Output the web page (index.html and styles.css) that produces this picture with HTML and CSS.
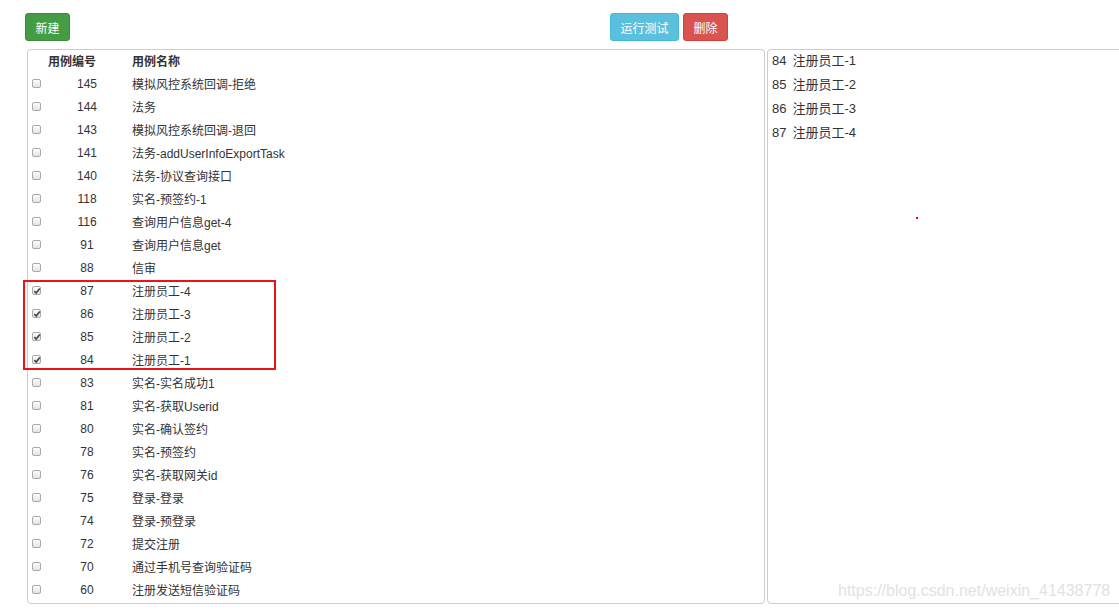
FILE: index.html
```html
<!DOCTYPE html>
<html lang="zh-CN">

<head>
    <meta charset="UTF-8">
    <meta name="viewport" content="width=device-width, initial-scale=1.0">
    <title>用例管理</title>
    <link rel="stylesheet" href="styles.css">
</head>

<body>
    <div class="toolbar">
        <button class="btn btn-success">新建</button>
        <div class="btn-group">
            <button class="btn btn-info">运行测试</button>
            <button class="btn btn-danger">删除</button>
        </div>
    </div>
    <div class="panels">
        <div class="panel case-panel">
            <table class="case-table">
                <thead>
                    <tr>
                        <th class="col-check"></th>
                        <th class="col-id">用例编号</th>
                        <th class="col-name">用例名称</th>
                    </tr>
                </thead>
                <tbody>
                    <tr><td class="col-check"><span class="cb"></span></td><td class="col-id">145</td><td class="col-name">模拟风控系统回调-拒绝</td></tr>
                    <tr><td class="col-check"><span class="cb"></span></td><td class="col-id">144</td><td class="col-name">法务</td></tr>
                    <tr><td class="col-check"><span class="cb"></span></td><td class="col-id">143</td><td class="col-name">模拟风控系统回调-退回</td></tr>
                    <tr><td class="col-check"><span class="cb"></span></td><td class="col-id">141</td><td class="col-name">法务-addUserInfoExportTask</td></tr>
                    <tr><td class="col-check"><span class="cb"></span></td><td class="col-id">140</td><td class="col-name">法务-协议查询接口</td></tr>
                    <tr><td class="col-check"><span class="cb"></span></td><td class="col-id">118</td><td class="col-name">实名-预签约-1</td></tr>
                    <tr><td class="col-check"><span class="cb"></span></td><td class="col-id">116</td><td class="col-name">查询用户信息get-4</td></tr>
                    <tr><td class="col-check"><span class="cb"></span></td><td class="col-id">91</td><td class="col-name">查询用户信息get</td></tr>
                    <tr><td class="col-check"><span class="cb"></span></td><td class="col-id">88</td><td class="col-name">信审</td></tr>
                    <tr><td class="col-check"><span class="cb checked"><svg viewBox="0 0 8 8" width="8" height="8"><path d="M1.3 4.2 L3.2 6 L6.8 1.6" fill="none" stroke="#444" stroke-width="1.6"/></svg></span></td><td class="col-id">87</td><td class="col-name">注册员工-4</td></tr>
                    <tr><td class="col-check"><span class="cb checked"><svg viewBox="0 0 8 8" width="8" height="8"><path d="M1.3 4.2 L3.2 6 L6.8 1.6" fill="none" stroke="#444" stroke-width="1.6"/></svg></span></td><td class="col-id">86</td><td class="col-name">注册员工-3</td></tr>
                    <tr><td class="col-check"><span class="cb checked"><svg viewBox="0 0 8 8" width="8" height="8"><path d="M1.3 4.2 L3.2 6 L6.8 1.6" fill="none" stroke="#444" stroke-width="1.6"/></svg></span></td><td class="col-id">85</td><td class="col-name">注册员工-2</td></tr>
                    <tr><td class="col-check"><span class="cb checked"><svg viewBox="0 0 8 8" width="8" height="8"><path d="M1.3 4.2 L3.2 6 L6.8 1.6" fill="none" stroke="#444" stroke-width="1.6"/></svg></span></td><td class="col-id">84</td><td class="col-name">注册员工-1</td></tr>
                    <tr><td class="col-check"><span class="cb"></span></td><td class="col-id">83</td><td class="col-name">实名-实名成功1</td></tr>
                    <tr><td class="col-check"><span class="cb"></span></td><td class="col-id">81</td><td class="col-name">实名-获取Userid</td></tr>
                    <tr><td class="col-check"><span class="cb"></span></td><td class="col-id">80</td><td class="col-name">实名-确认签约</td></tr>
                    <tr><td class="col-check"><span class="cb"></span></td><td class="col-id">78</td><td class="col-name">实名-预签约</td></tr>
                    <tr><td class="col-check"><span class="cb"></span></td><td class="col-id">76</td><td class="col-name">实名-获取网关id</td></tr>
                    <tr><td class="col-check"><span class="cb"></span></td><td class="col-id">75</td><td class="col-name">登录-登录</td></tr>
                    <tr><td class="col-check"><span class="cb"></span></td><td class="col-id">74</td><td class="col-name">登录-预登录</td></tr>
                    <tr><td class="col-check"><span class="cb"></span></td><td class="col-id">72</td><td class="col-name">提交注册</td></tr>
                    <tr><td class="col-check"><span class="cb"></span></td><td class="col-id">70</td><td class="col-name">通过手机号查询验证码</td></tr>
                    <tr><td class="col-check"><span class="cb"></span></td><td class="col-id">60</td><td class="col-name">注册发送短信验证码</td></tr>
                </tbody>
            </table>
            <div class="highlight"></div>
        </div>
        <div class="panel selected-panel">
            <div class="selected-item"><span class="sel-id">84</span>注册员工-1</div>
            <div class="selected-item"><span class="sel-id">85</span>注册员工-2</div>
            <div class="selected-item"><span class="sel-id">86</span>注册员工-3</div>
            <div class="selected-item"><span class="sel-id">87</span>注册员工-4</div>
            <div class="dot"></div>
        </div>
    </div>
    <div class="watermark">https://blog.csdn.net/weixin_41438778</div>
</body>

</html>
```
FILE: styles.css
```css
* {
    margin: 0;
    padding: 0;
    box-sizing: border-box;
}

body {
    font-family: "Liberation Sans", "Noto Sans CJK SC", sans-serif;
    font-size: 12px;
    color: #333;
    background: #fff;
    padding: 13px 0 0 25px;
    overflow: hidden;
    height: 613px;
    position: relative;
}

.toolbar {
    display: flex;
    height: 28px;
}

.btn-group {
    display: flex;
    gap: 4px;
    margin-left: 540px;
}

.btn {
    height: 28px;
    padding: 0 9.5px;
    border: 1px solid transparent;
    border-radius: 3px;
    color: #fff;
    font-family: inherit;
    font-size: 12px;
}

.btn-success {
    background-color: #449d44;
    border-color: #3d8b3d;
}

.btn-info {
    background-color: #5bc0de;
    border-color: #46b8da;
}

.btn-danger {
    background-color: #d9534f;
    border-color: #d43f3a;
}

.panels {
    display: flex;
    gap: 2px;
    margin-top: 8px;
    margin-left: 2px;
}

.panel {
    flex-shrink: 0;
    border: 1px solid #ccc;
    border-radius: 4px;
    height: 555px;
    position: relative;
}

.case-panel {
    width: 738px;
}

.selected-panel {
    width: 370px;
    padding-left: 4px;
    padding-top: 0;
}

.case-table {
    border-collapse: collapse;
    margin-top: -1px;
}

.case-table th,
.case-table td {
    height: 23px;
    padding: 0;
    vertical-align: middle;
    white-space: nowrap;
}

.case-table th {
    font-weight: bold;
    text-align: left;
}

.col-check {
    width: 20px;
    padding-left: 4px !important;
}

.col-id {
    width: 84px;
}

td.col-id {
    text-align: center;
    padding-right: 6px !important;
}

.cb {
    display: block;
    width: 9px;
    height: 9px;
    border: 1px solid #aaa;
    border-radius: 2px;
    background: linear-gradient(#fdfdfd, #e4e4e4);
    position: relative;
}

.cb svg {
    position: absolute;
    left: -0.5px;
    top: -0.5px;
}

.highlight {
    position: absolute;
    left: -5px;
    top: 230px;
    width: 253px;
    height: 90px;
    border: 2px solid #e8141a;
}

.selected-item {
    height: 24px;
    line-height: 22px;
    font-size: 13px;
}

.sel-id {
    margin-right: 6px;
}

.dot {
    position: absolute;
    left: 148px;
    top: 167px;
    width: 2px;
    height: 2px;
    background: #f00;
}

.watermark {
    position: absolute;
    left: 838px;
    top: 582px;
    color: #e2e2e2;
    font-size: 16px;
}
```
